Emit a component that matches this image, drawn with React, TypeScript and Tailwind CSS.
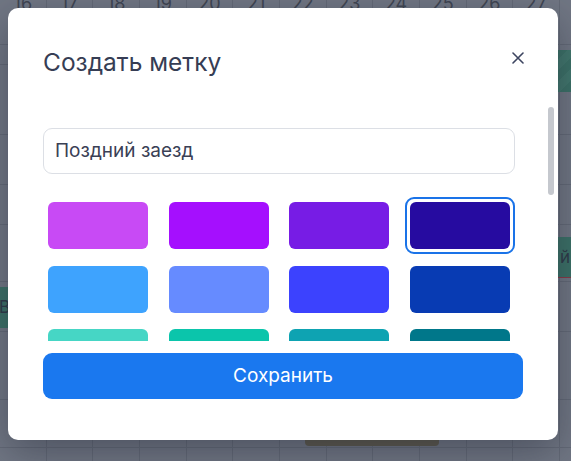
import React from "react";

const days = [16, 17, 18, 19, 20, 21, 22, 23, 24, 25, 26, 27];
const rowHeights = [20, 70, 50, 40, 57, 50, 68, 48, 40];

const swatches = [
  "#c84af5", "#a50ffe", "#771ce5", "#260ba0",
  "#3ea3fe", "#668bff", "#3c42fe", "#083bb3",
  "#46d6c5", "#0bc5ab", "#0ea3b2", "#00778a",
  "#f5c542", "#f59e0b", "#ea580c", "#b45309",
];

function XIcon() {
  return (
    <svg width="12" height="12" viewBox="0 0 12 12" fill="none">
      <path d="M1 1L11 11M11 1L1 11" stroke="#3d4560" strokeWidth="1.6" strokeLinecap="round" />
    </svg>
  );
}

export default function App() {
  return (
    <div className="relative w-[571px] h-[461px] overflow-hidden bg-[#717784] font-['Inter',sans-serif]">
      {/* background calendar (dimmed) */}
      <div className="flex flex-col">
        <div className="grid grid-cols-[repeat(12,46.67px)] h-[45px] border-b border-[#646a77]">
          {days.map((d) => (
            <div key={d} className="border-r border-[#646a77] flex justify-center">
              <span className="-mt-[10px] text-[18px] text-[#3f4552]">{d}</span>
            </div>
          ))}
        </div>
        {rowHeights.map((h, i) => (
          <div
            key={i}
            className="grid grid-cols-[repeat(12,46.67px)] border-b border-[#646a77]"
            style={{ height: h }}
          >
            {days.map((d) => (
              <div key={d} className="border-r border-[#646a77]" />
            ))}
          </div>
        ))}
      </div>
      {/* events under overlay */}
      <div className="absolute left-[556px] top-[50px] w-[40px] h-[42px] bg-[repeating-linear-gradient(135deg,#3b7267_0px,#3b7267_8px,#41786d_8px,#41786d_16px)]" />
      <div className="absolute left-[556px] top-[237px] w-[40px] h-[41px] bg-[#3b7267] border-b border-[#8a3a45] text-[17px] text-[#2e3a48] pl-[4px] pt-[8px]">й Г</div>
      <div className="absolute -left-[20px] top-[287px] w-[28px] h-[41px] bg-[#3b7267] text-[17px] text-[#2e3a48] pl-[19px] pt-[8px]">В</div>
      <div className="absolute left-[305px] top-[436px] w-[134px] h-[10px] rounded-b-[4px] bg-[#5e5a4c]" />

      {/* modal */}
      <div className="absolute left-[8px] top-[8px] w-[550px] h-[432px] bg-white rounded-[10px] shadow-[0_12px_40px_rgba(30,35,50,0.45)] px-[35px] flex flex-col">
        <div className="h-[97px] flex items-start justify-between pt-[39px]">
          <h2 className="text-[24.5px] leading-[30px] font-normal text-[#363d54]">Создать метку</h2>
          <button className="mt-[3px] mr-[-3px] w-[16px] h-[16px] flex items-center justify-center">
            <XIcon />
          </button>
        </div>

        <div className="h-[236px] overflow-hidden pr-[8px]">
          <div className="pt-[23px]">
            <div className="h-[46px] rounded-[9px] border border-[#dcdfe5] flex items-center px-[11px]">
              <span className="text-[19px] text-[#3a4055]">Поздний заезд</span>
            </div>
          </div>
          <div className="mt-[23px] grid grid-cols-4 gap-x-[10.67px] gap-y-[6.5px]">
            {swatches.map((c, i) => (
              <div
                key={i}
                className={
                  i === 3
                    ? "rounded-[9px] border-2 border-[#1a73e8] p-[3px]"
                    : "rounded-[9px] border-2 border-transparent p-[3px]"
                }
              >
                <div className="h-[47px] rounded-[6px]" style={{ backgroundColor: c }} />
              </div>
            ))}
          </div>
        </div>

        <button className="mt-[12px] h-[46px] w-full rounded-[9px] bg-[#1a78ef] text-white text-[19px] font-normal">
          Сохранить
        </button>

        {/* scrollbar thumb */}
        <div className="absolute right-[4px] top-[99px] w-[6px] h-[88px] rounded-full bg-[#c5c8ce]" />
      </div>
    </div>
  );
}
